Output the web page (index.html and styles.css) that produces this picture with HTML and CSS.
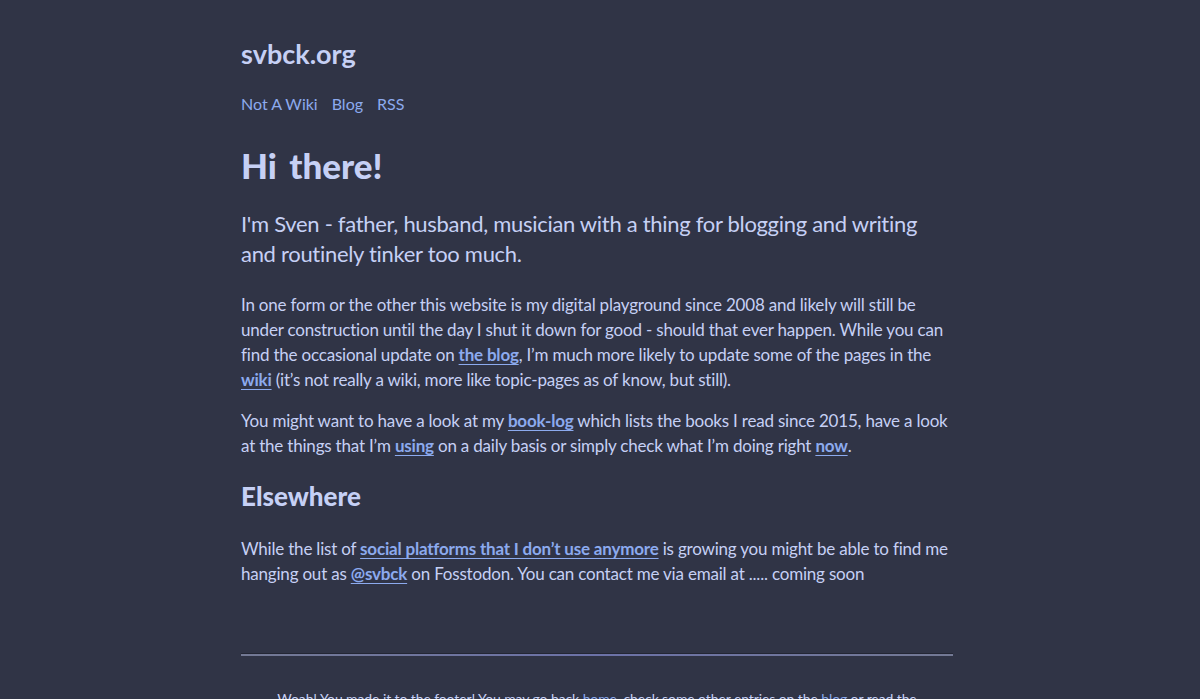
FILE: index.html
```html
<!DOCTYPE html>
<html lang="en">
<head>
<meta charset="utf-8">
<title>svbck.org</title>
<link rel="stylesheet" href="styles.css">
</head>
<body>
<div class="page">
  <header class="site-header">
    <a class="site-title" href="#">svbck.org</a>
    <nav class="site-nav">
      <a href="#">Not A Wiki</a>
      <a href="#">Blog</a>
      <a href="#">RSS</a>
    </nav>
  </header>
  <main class="content">
    <h1 class="hero">Hi there!</h1>
    <p class="lead">I'm Sven - father, husband, musician with a thing for blogging and writing and routinely tinker too much.</p>
    <p class="first">In one form or the other this website is my digital playground since 2008 and likely will still be under construction until the day I shut it down for good - should that ever happen. While you can find the occasional update on <a href="#">the blog</a>, I’m much more likely to update some of the pages in the <a href="#">wiki</a> (it’s not really a wiki, more like topic-pages as of know, but still).</p>
    <p>You might want to have a look at my <a href="#">book-log</a> which lists the books I read since 2015, have a look at the things that I’m <a href="#">using</a> on a daily basis or simply check what I’m doing right <a href="#">now</a>.</p>
    <h2 class="section">Elsewhere</h2>
    <p class="after-heading">While the list of <a href="#">social platforms that I don’t use anymore</a> is growing you might be able to find me hanging out as <a href="#">@svbck</a> on Fosstodon. You can contact me via email at ..... coming soon</p>
  </main>
  <footer class="site-footer">
    <hr class="divider">
    <p class="footer-text">Woah! You made it to the footer! You may go back <a href="#">home</a>, check some other entries on the <a href="#">blog</a> or read the <a href="#">wiki</a>.</p>
  </footer>
</div>
</body>
</html>
```

FILE: styles.css
```css
html, body {
  margin: 0;
  padding: 0;
  background: #303446;
}
body {
  color: #c6d0f5;
  font-family: Lato, "Noto Sans", sans-serif;
  font-size: 17px;
  line-height: 25px;
  letter-spacing: -0.2px;
}
a {
  color: #8caaee;
}
.page {
  max-width: 718px;
  box-sizing: border-box;
  padding-right: 6px;
  margin: 0 auto;
  padding-top: 37px;
}
.site-header {
  display: flex;
  flex-direction: column;
  gap: 21px;
}
.site-title {
  color: #c6d0f5;
  text-decoration: none;
  font-weight: 700;
  font-size: 27px;
  line-height: 34px;
  letter-spacing: 0;
}
.site-nav {
  display: flex;
  gap: 14px;
  font-size: 16px;
  line-height: 24px;
  letter-spacing: 0;
}
.site-nav a {
  text-decoration: none;
}
.hero {
  font-size: 35px;
  line-height: 44px;
  font-weight: 900;
  word-spacing: 4px;
  letter-spacing: 0;
  margin: 27px 0 0;
  color: #c6d0f5;
}
.content p {
  margin: 16px 0 0;
}
.content .lead {
  font-size: 22px;
  line-height: 30px;
  letter-spacing: -0.3px;
  margin-top: 22px;
}
.content .first {
  margin-top: 23px;
}
.content .after-heading {
  margin-top: 23px;
}
.content a {
  font-weight: 700;
  text-underline-offset: 3px;
}
.section {
  font-size: 26px;
  line-height: 34px;
  font-weight: 900;
  letter-spacing: 0;
  margin: 21px 0 0;
  color: #c6d0f5;
}
.site-footer {
  margin-top: 67px;
}
.divider {
  margin: 0;
  border: 0;
  height: 2px;
  border-top: 1px solid #232634;
  background: linear-gradient(90deg, #737994, #6c72a8 50%, #737994);
}
.footer-text {
  text-align: center;
  font-size: 14px;
  line-height: 20px;
  letter-spacing: -0.1px;
  margin: 33px 36px 0;
}
.footer-text a {
  text-decoration: none;
}
```
